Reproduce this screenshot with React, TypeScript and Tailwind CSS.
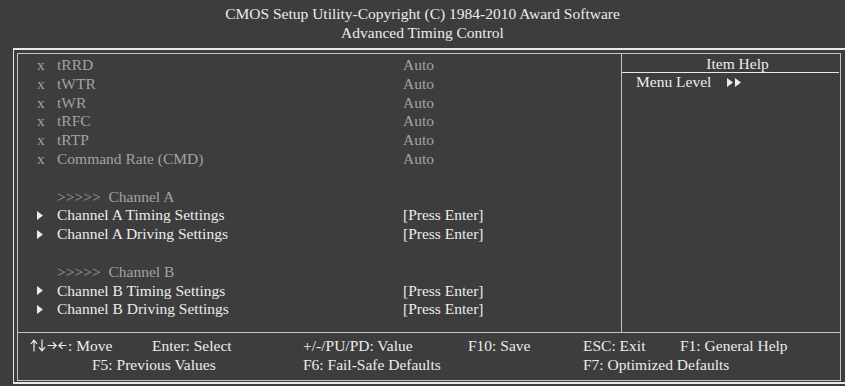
import React from "react";

const Tri = () => (
  <svg width="6" height="9" viewBox="0 0 6 9" className="inline-block">
    <polygon points="0,0 6,4.5 0,9" fill="#ececec" />
  </svg>
);

const DoubleTri = () => (
  <svg width="15" height="9" viewBox="0 0 15 9" className="inline-block">
    <polygon points="0,0 6,4.5 0,9" fill="#ececec" />
    <polygon points="8,0 14,4.5 8,9" fill="#ececec" />
  </svg>
);

const Arrows = () => (
  <svg width="37" height="13" viewBox="0 0 37 13" className="inline-block mr-[1px]" fill="none" stroke="#ececec" strokeWidth="1.2">
    {/* up */}
    <path d="M4 12.5 V1.5 M1 4.8 L4 1.2 L7 4.8" />
    {/* down */}
    <path d="M12 0.5 V11.5 M9 8.2 L12 11.8 L15 8.2" />
    {/* right */}
    <path d="M17.5 6.5 H26 M22.8 3.3 L26.2 6.5 L22.8 9.7" />
    {/* left */}
    <path d="M36.5 6.5 H29 M32.4 3.3 L28.8 6.5 L32.4 9.7" />
  </svg>
);

type Row =
  | { kind: "dis"; name: string; value: string }
  | { kind: "blank" }
  | { kind: "head"; name: string }
  | { kind: "sub"; name: string; value: string };

const rows: Row[] = [
  { kind: "dis", name: "tRRD", value: "Auto" },
  { kind: "dis", name: "tWTR", value: "Auto" },
  { kind: "dis", name: "tWR", value: "Auto" },
  { kind: "dis", name: "tRFC", value: "Auto" },
  { kind: "dis", name: "tRTP", value: "Auto" },
  { kind: "dis", name: "Command Rate (CMD)", value: "Auto" },
  { kind: "blank" },
  { kind: "head", name: ">>>>>  Channel A" },
  { kind: "sub", name: "Channel A Timing Settings", value: "[Press Enter]" },
  { kind: "sub", name: "Channel A Driving Settings", value: "[Press Enter]" },
  { kind: "blank" },
  { kind: "head", name: ">>>>>  Channel B" },
  { kind: "sub", name: "Channel B Timing Settings", value: "[Press Enter]" },
  { kind: "sub", name: "Channel B Driving Settings", value: "[Press Enter]" },
];

export default function App() {
  return (
    <div className="w-[845px] h-[386px] overflow-hidden bg-[#3d3d3d] text-[#ececec] text-[15.5px] font-['Liberation_Serif','Times_New_Roman',serif]">
      <div className="h-[48px] pt-[4px] text-center leading-[19px]">
        <div>CMOS Setup Utility-Copyright (C) 1984-2010 Award Software</div>
        <div>Advanced Timing Control</div>
      </div>
      <div className="ml-[13px] w-[840px] h-[336px] border-t-2 border-l border-b-2 border-[#e8e8e8] pt-[3px] pl-[3px] pb-[2px]">
        <div className="w-[824px] h-[328px] border border-[#c4c4c4] flex flex-col">
          <div className="flex h-[279px] border-b border-[#c4c4c4]">
            <div className="w-[604px] border-r border-[#c4c4c4] pt-[2px] leading-[18.8px]">
              {rows.map((r, i) => {
                if (r.kind === "blank") return <div key={i} className="h-[18.8px]" />;
                if (r.kind === "dis")
                  return (
                    <div key={i} className="flex text-[#a3a3a3] whitespace-pre">
                      <span className="w-[39px] pl-[19px]">x</span>
                      <span className="w-[346px]">{r.name}</span>
                      <span>{r.value}</span>
                    </div>
                  );
                if (r.kind === "head")
                  return (
                    <div key={i} className="flex text-[#a3a3a3] whitespace-pre">
                      <span className="w-[39px]" />
                      <span>{r.name}</span>
                    </div>
                  );
                return (
                  <div key={i} className="flex whitespace-pre">
                    <span className="w-[39px] pl-[19px] flex items-center">
                      <Tri />
                    </span>
                    <span className="w-[346px]">{r.name}</span>
                    <span>{r.value}</span>
                  </div>
                );
              })}
            </div>
            <div className="flex-1">
              <div className="h-[19px] leading-[19px] border-b border-[#e8e8e8] text-center pl-[14px] mr-[1px]">
                Item Help
              </div>
              <div className="pl-[14px] leading-[18px] flex items-center">
                <span>Menu Level</span>
                <span className="ml-[16px] flex items-center">
                  <DoubleTri />
                </span>
              </div>
            </div>
          </div>
          <div className="pt-[3px] leading-[19px] whitespace-pre">
            <div className="flex pl-[12px]">
              <span className="w-[122px] flex items-center">
                <Arrows />
                <span>: Move</span>
              </span>
              <span className="w-[151px]">Enter: Select</span>
              <span className="w-[165px]">+/-/PU/PD: Value</span>
              <span className="w-[115px]">F10: Save</span>
              <span className="w-[97px]">ESC: Exit</span>
              <span>F1: General Help</span>
            </div>
            <div className="flex pl-[74px]">
              <span className="w-[211px]">F5: Previous Values</span>
              <span className="w-[280px]">F6: Fail-Safe Defaults</span>
              <span>F7: Optimized Defaults</span>
            </div>
          </div>
        </div>
      </div>
    </div>
  );
}
